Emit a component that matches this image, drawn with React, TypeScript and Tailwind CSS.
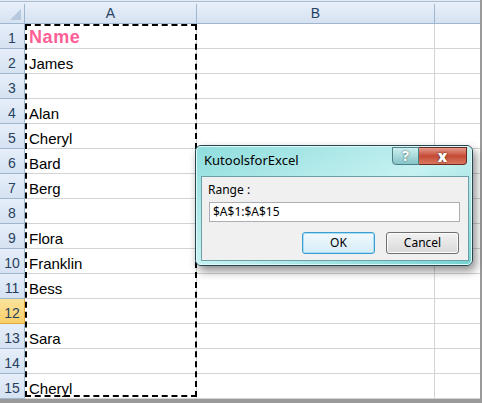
import React from 'react';

const rows: string[] = [
  'Name',
  'James',
  '',
  'Alan',
  'Cheryl',
  'Bard',
  'Berg',
  '',
  'Flora',
  'Franklin',
  'Bess',
  '',
  'Sara',
  '',
  'Cheryl',
];

const ROW_H = 25;

export default function App() {
  return (
    <div className="relative h-[403px] w-[482px] overflow-hidden bg-[#9a9a9a] font-['Liberation_Sans',Arial,sans-serif]">
      <div className="h-[399px] w-[480px] overflow-hidden bg-white">
        {/* top strip */}
        <div className="h-[1px] bg-[#e4eaf2]" />
        <div className="h-[1px] bg-[#a9bdd6]" />
        <div className="h-[2px] bg-[#e9eff8]" />

        {/* column headers */}
        <div className="flex h-[20px] border-b border-[#9eb6ce] bg-gradient-to-b from-[#e6eef9] to-[#d6e2f2] text-[14px] text-[#27415f]">
          <div className="relative w-[25px] shrink-0 border-r border-[#9eb6ce]">
            <div className="absolute bottom-[3px] right-[3px] h-0 w-0 border-b-[11px] border-l-[11px] border-b-[#b7c8dc] border-l-transparent" />
          </div>
          <div className="flex w-[172px] shrink-0 items-center justify-center border-r border-[#9eb6ce]">A</div>
          <div className="flex w-[238px] shrink-0 items-center justify-center border-r border-[#9eb6ce]">B</div>
          <div className="flex-1" />
        </div>

        {/* rows */}
        <div className="relative">
          {rows.map((name, i) => {
            const active = i === 11;
            return (
              <div key={i} className="flex" style={{ height: ROW_H }}>
                <div
                  className={`flex w-[25px] shrink-0 items-end justify-center pb-[3px] text-[14px] leading-none border-r border-b ${
                    active
                      ? 'border-[#e1a93c] bg-gradient-to-b from-[#fde49b] to-[#f8cf68] text-[#27415f]'
                      : 'border-[#9eb6ce] bg-gradient-to-b from-[#e6eef9] to-[#d6e2f2] text-[#27415f]'
                  }`}
                >
                  {i + 1}
                </div>
                <div className="flex w-[172px] shrink-0 items-end border-r border-b border-[#d4d4d4] pb-[2px] pl-[4px]">
                  {i === 0 ? (
                    <span className="text-[18px] font-black leading-none tracking-[0.6px] text-[#ff5f97]">{name}</span>
                  ) : (
                    <span className="text-[15px] leading-none text-black">{name}</span>
                  )}
                </div>
                <div className="w-[238px] shrink-0 border-r border-b border-[#d4d4d4]" />
                <div className="flex-1 border-b border-[#d4d4d4]" />
              </div>
            );
          })}

          {/* marching ants around A1:A15 */}
          <div className="pointer-events-none absolute left-[25px] top-[0px] h-[373px] w-[172px] border-2 border-dashed border-black" />
        </div>
      </div>

      {/* dialog */}
      <div className="absolute left-[195px] top-[145px] h-[121px] w-[278px] rounded-[6px] border border-[#26454e] bg-gradient-to-br from-[#8edddd] via-[#c6f1f1] to-[#74d2d2] shadow-[3px_5px_10px_rgba(0,0,0,0.45)] font-['Noto_Sans','Open_Sans',sans-serif]">
        <div className="absolute inset-0 rounded-[5px] border border-[#dff8f8]" />
        {/* title bar */}
        <div className="relative flex h-[29px] items-start">
          <span className="ml-[8px] mt-[8px] text-[13px] leading-none text-black">KutoolsforExcel</span>
          <div className="absolute right-[5px] top-[1px] flex h-[18px]">
            <div className="flex w-[27px] items-center justify-center rounded-bl-[4px] border border-[#4d7f86] bg-gradient-to-b from-[#cdeff0] to-[#86c4c7] text-[14px] font-bold leading-none text-white [text-shadow:0_0_2px_#2c4d55]">
              ?
            </div>
            <div className="flex w-[48px] items-center justify-center rounded-br-[4px] border border-l-0 border-[#6b2a20] bg-gradient-to-b from-[#e59a8c] via-[#c44a36] to-[#d9785f] text-[15px] font-black leading-none text-white [text-shadow:0_0_2px_#3a120a]">
              x
            </div>
          </div>
        </div>

        {/* client area */}
        <div className="absolute left-[5px] top-[30px] h-[85px] w-[268px] border border-[#6f9fa6] bg-[#f0f0f0] text-[12px] text-black">
          <div className="ml-[6px] mt-[7px] leading-none">Range :</div>
          <div className="ml-[7px] mt-[6px] flex h-[20px] w-[251px] items-center border border-[#abadb3] bg-white pl-[3px] leading-none">
            $A$1:$A$15
          </div>
          <div className="mr-[9px] mt-[10px] flex justify-end gap-[11px]">
            <div className="flex h-[22px] w-[73px] items-center justify-center rounded-[3px] border border-[#3c9dd0] bg-gradient-to-b from-[#f1f9fe] to-[#d6ecf8] shadow-[inset_0_0_0_1px_#a8dcf3] leading-none">
              OK
            </div>
            <div className="flex h-[22px] w-[73px] items-center justify-center rounded-[3px] border border-[#707070] bg-gradient-to-b from-[#f2f2f2] to-[#d9d9d9] shadow-[inset_0_0_0_1px_#fcfcfc] leading-none">
              Cancel
            </div>
          </div>
        </div>
      </div>
    </div>
  );
}
